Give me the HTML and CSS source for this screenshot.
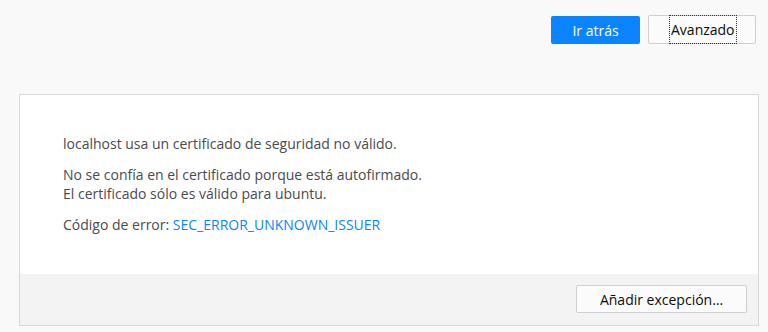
FILE: index.html
```html
<!DOCTYPE html>
<html lang="es">
<head>
  <meta charset="UTF-8">
  <title>Advertencia: riesgo potencial de seguridad</title>
  <link rel="stylesheet" href="styles.css">
</head>
<body>
  <!-- Botones superiores -->
  <div class="top-actions">
    <button class="btn btn-primary">Ir atrás</button>
    <button class="btn btn-focus"><span class="focus-ring">Avanzado</span></button>
  </div>

  <!-- Panel avanzado -->
  <div class="panel">
    <div class="panel-body">
      <p>localhost usa un certificado de seguridad no válido.</p>
      <p>No se confía en el certificado porque está autofirmado.<br>El certificado sólo es válido para ubuntu.</p>
      <p>Código de error: <a class="error-code" href="#">SEC_ERROR_UNKNOWN_ISSUER</a></p>
    </div>
    <div class="panel-footer">
      <button class="btn btn-exception">Añadir excepción…</button>
    </div>
  </div>
</body>
</html>
```

FILE: styles.css
```css
/* Estilos globales */
* { margin: 0; padding: 0; box-sizing: border-box; }
html, body { height: 100%; }
body {
  background-color: #f9f9fa;
  color: #4a4a4f;
  font-family: "Open Sans", "Noto Sans", sans-serif;
  font-size: 14px;
  padding: 16px 9px 0 19px;
}

/* Botones */
.btn {
  font-family: inherit;
  font-size: 14px;
  height: 28px;
  border-radius: 2px;
  cursor: pointer;
}

.top-actions {
  display: flex;
  justify-content: flex-end;
  gap: 8px;
  padding-right: 3px;
}

.btn-primary {
  width: 89px;
  background-color: #0a84ff;
  color: #fff;
  border: none;
}

.btn-focus {
  width: 108px;
  height: 29px;
  margin-top: -1px;
  background-color: #fbfbfb;
  color: #0c0c0d;
  border: 1px solid #cfcfd1;
  padding: 0 19px 0 20px;
  display: flex;
}

.focus-ring {
  display: flex;
  align-items: center;
  height: calc(100% + 2px);
  margin-top: -1px;
  padding: 0 1px;
  border: 1px dotted #333;
}

/* Pannello */
.panel {
  margin-top: 50px;
  background-color: #fff;
  border: 1px solid #d7d7db;
}

.panel-body {
  padding: 39px 20px 40px 43px;
  line-height: 19px;
}

.panel-body p + p {
  margin-top: 12px;
}

.error-code {
  color: #0a84ff;
  text-decoration: none;
}

.panel-footer {
  background-color: #f3f3f4;
  display: flex;
  justify-content: flex-end;
  padding: 11px 11px 12px 0;
}

.btn-exception {
  width: 171px;
  background-color: #fbfbfb;
  color: #0c0c0d;
  border: 1px solid #cfcfd1;
}
```
